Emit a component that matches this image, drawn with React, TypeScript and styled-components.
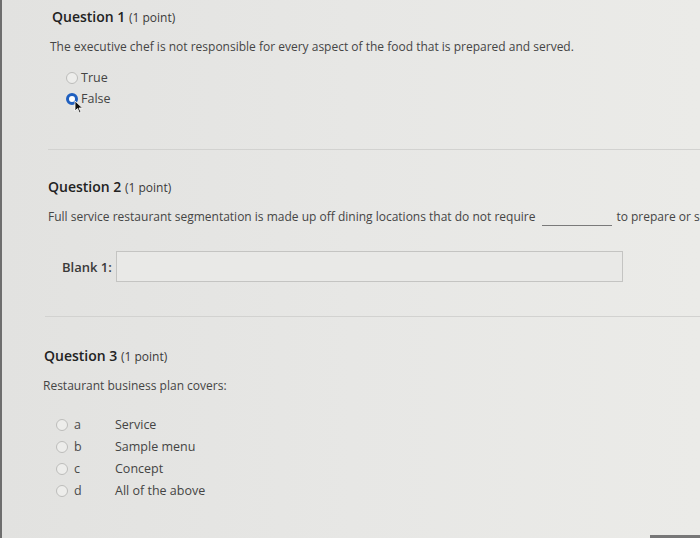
import React from 'react'
import styled, { createGlobalStyle } from 'styled-components'

const GlobalStyle = createGlobalStyle`
  html, body {
    margin: 0;
    padding: 0;
    background: #e6e6e4;
  }
  body {
    font-family: "Open Sans", "Liberation Sans", sans-serif;
    color: #4a4a4a;
  }
`

const Screen = styled.div`
  position: relative;
  width: 700px;
  height: 538px;
  overflow: hidden;
  box-sizing: border-box;
  border-left: 2px solid #6e6e6e;
  background: linear-gradient(90deg, #e2e2e0 0%, #e7e7e5 50%, #ebebe8 100%);
`

const Section = styled.section<{ $left: number; $top: number; $height: number }>`
  box-sizing: border-box;
  height: ${p => p.$height}px;
  padding: ${p => p.$top}px 0 0 ${p => p.$left}px;
`

const Divider = styled.hr<{ $left: number }>`
  margin: 0 0 0 ${p => p.$left}px;
  border: 0;
  border-top: 1.5px solid #d2d2d0;
  height: 0;
`

const Title = styled.h2`
  margin: 0;
  font-size: 14px;
  line-height: 20px;
  font-weight: 600;
  color: #222;
`

const Points = styled.span`
  font-size: 12px;
  font-weight: 400;
  color: #3a3a3a;
`

const Prompt = styled.p<{ $shift: number }>`
  margin: 10px 0 0 ${p => p.$shift}px;
  font-size: 12px;
  line-height: 18px;
  color: #454545;
  white-space: nowrap;
`

const Blank = styled.span`
  display: inline-block;
  width: 70px;
  margin: 0 4px 0 7px;
  border-bottom: 1.5px solid #7a7a7a;
  height: 13px;
  vertical-align: -5px;
`

const Options = styled.div<{ $gap: number; $top: number; $indent: number }>`
  display: flex;
  flex-direction: column;
  gap: ${p => p.$gap}px;
  margin: ${p => p.$top}px 0 0 ${p => p.$indent}px;
`

const Option = styled.label`
  display: flex;
  align-items: center;
  font-size: 12.5px;
  line-height: 16px;
  color: #444;
`

const Radio = styled.span<{ $checked?: boolean }>`
  position: relative;
  box-sizing: border-box;
  width: 12px;
  height: 12px;
  border-radius: 50%;
  margin-right: 3px;
  flex: none;
  background: ${p => (p.$checked ? '#fff' : '#ededeb')};
  border: ${p => (p.$checked ? '3.5px solid #1f5fbf' : '1px solid #bdbdbb')};
`

const Cursor = styled.svg`
  position: absolute;
  left: 5px;
  top: 4px;
  width: 10px;
  height: 14px;
`

const Letter = styled.span`
  width: 41px;
  margin-left: 3px;
  color: #4a4a4a;
`

const BlankRow = styled.div`
  display: flex;
  align-items: center;
  margin: 25px 0 0 14px;
`

const BlankLabel = styled.span`
  width: 54px;
  font-size: 13px;
  font-weight: 600;
  color: #3a3a3a;
`

const Input = styled.div`
  width: 507px;
  height: 31px;
  box-sizing: border-box;
  border: 1px solid #c4c4c2;
  background: #e9e9e7;
`

const BottomBar = styled.div`
  position: absolute;
  right: 0;
  bottom: 0;
  width: 50px;
  height: 3px;
  background: #777;
`

export default function App() {
  const choices = [
    ['a', 'Service'],
    ['b', 'Sample menu'],
    ['c', 'Concept'],
    ['d', 'All of the above'],
  ]
  return (
    <>
      <GlobalStyle />
      <Screen>
        <Section $left={50} $top={7} $height={149}>
          <Title>
            Question 1 <Points>(1 point)</Points>
          </Title>
          <Prompt $shift={-2}>
            The executive chef is not responsible for every aspect of the food that is prepared and served.
          </Prompt>
          <Options $gap={5} $top={14} $indent={14}>
            <Option>
              <Radio />
              True
            </Option>
            <Option>
              <Radio $checked>
                <Cursor viewBox="0 0 10 14">
                  <path d="M1 1 L1 11 L3.5 8.5 L5.5 13 L7 12.3 L5 8 L8.5 8 Z" fill="#111" stroke="#fff" strokeWidth="0.8" />
                </Cursor>
              </Radio>
              False
            </Option>
          </Options>
        </Section>
        <Divider $left={46} />
        <Section $left={46} $top={27} $height={166}>
          <Title>
            Question 2 <Points>(1 point)</Points>
          </Title>
          <Prompt $shift={0}>
            Full service restaurant segmentation is made up off dining locations that do not require
            <Blank />
            to prepare or serve
          </Prompt>
          <BlankRow>
            <BlankLabel>Blank 1:</BlankLabel>
            <Input />
          </BlankRow>
        </Section>
        <Divider $left={43} />
        <Section $left={42} $top={29} $height={220}>
          <Title>
            Question 3 <Points>(1 point)</Points>
          </Title>
          <Prompt $shift={-1}>Restaurant business plan covers:</Prompt>
          <Options $gap={6} $top={22} $indent={12}>
            {choices.map(([l, t]) => (
              <Option key={l}>
                <Radio />
                <Letter>{l}</Letter>
                {t}
              </Option>
            ))}
          </Options>
        </Section>
        <BottomBar />
      </Screen>
    </>
  )
}
